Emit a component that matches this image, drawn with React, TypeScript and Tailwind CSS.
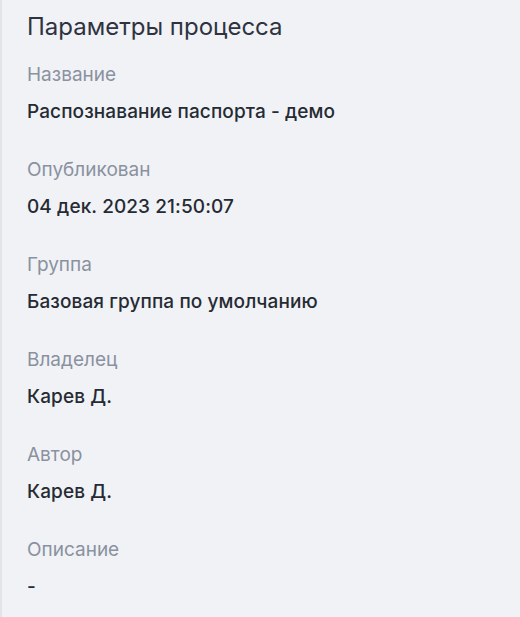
import React from "react";

const fields: [string, string][] = [
  ["Название", "Распознавание паспорта - демо"],
  ["Опубликован", "04 дек. 2023 21:50:07"],
  ["Группа", "Базовая группа по умолчанию"],
  ["Владелец", "Карев Д."],
  ["Автор", "Карев Д."],
  ["Описание", "-"],
];

export default function App() {
  return (
    <div
      className="min-h-[617px] w-[520px] bg-[#f0f2f6] border-l-2 border-[#e2e4e9] pl-[25px] pt-[13px]"
      style={{ fontFamily: "Inter, 'Noto Sans', sans-serif" }}
    >
      <h2 className="text-[24px] leading-[28px] text-[#2f3340]">Параметры процесса</h2>
      <div className="mt-[22px] flex flex-col gap-[34px]">
        {fields.map(([label, value]) => (
          <div key={label} className="flex flex-col gap-[13px]">
            <span className="text-[19px] leading-[24px] text-[#8a919f]">{label}</span>
            <span className="text-[19px] leading-[24px] font-medium tracking-[0.1px] text-[#262a33]">{value}</span>
          </div>
        ))}
      </div>
    </div>
  );
}
